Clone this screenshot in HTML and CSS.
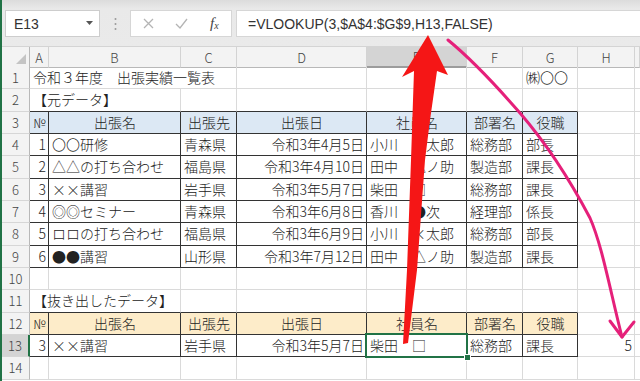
FILE: index.html
```html
<!DOCTYPE html>
<html lang="ja">
<head>
    <meta charset="UTF-8">
    <meta name="viewport" content="width=device-width, initial-scale=1.0">
    <title>出張実績一覧表</title>
    <link rel="stylesheet" href="styles.css">
</head>
<body>
    <div class="app">
        <div class="toolbar">
            <div class="namebox">
                <span>E13</span>
                <svg class="caret" width="7" height="4" viewBox="0 0 7 4"><path d="M0 0h7L3.5 4z" fill="#555"/></svg>
            </div>
            <div class="grip">
                <svg width="3" height="14" viewBox="0 0 3 14"><circle cx="1.5" cy="2" r="1" fill="#9a9a9a"/><circle cx="1.5" cy="7" r="1" fill="#9a9a9a"/><circle cx="1.5" cy="12" r="1" fill="#9a9a9a"/></svg>
            </div>
            <div class="fbuttons">
                <svg class="ico" width="11" height="11" viewBox="0 0 11 11"><path d="M1 1l9 9M10 1l-9 9" stroke="#b4b4b4" stroke-width="1.3"/></svg>
                <svg class="ico" width="13" height="11" viewBox="0 0 13 11"><path d="M1 6l4 4 7-9" stroke="#b4b4b4" stroke-width="1.3" fill="none"/></svg>
                <span class="fx"><i>f</i><sub>x</sub></span>
            </div>
            <div class="formula">=VLOOKUP(3,$A$4:$G$9,H13,FALSE)</div>
        </div>

        <div class="sheet">
            <div class="row colhead">
                <div class="corner"><svg width="10" height="10" viewBox="0 0 10 10"><path d="M10 0v10H0z" fill="#c4c4c4"/></svg></div>
                <div>A</div><div>B</div><div>C</div><div>D</div>
                <div class="sel-col">E</div><div>F</div><div>G</div><div>H</div><div></div>
            </div>

            <div class="row">
                <div class="rh">1</div>
                <div class="span3">令和３年度　出張実績一覧表</div>
                <div></div><div></div><div></div>
                <div>㈱〇〇</div><div></div><div></div>
            </div>
            <div class="row">
                <div class="rh">2</div>
                <div class="span2 kb">【元データ】</div>
                <div class="kb"></div><div class="kb"></div><div class="kb"></div><div class="kb"></div><div class="kb"></div>
                <div></div><div></div>
            </div>
            <div class="row">
                <div class="rh">3</div>
                <div class="k blue no">№</div>
                <div class="k blue c">出張名</div>
                <div class="k blue c">出張先</div>
                <div class="k blue c">出張日</div>
                <div class="k blue c">社員名</div>
                <div class="k blue c">部署名</div>
                <div class="k blue c">役職</div>
                <div></div><div></div>
            </div>
            <div class="row">
                <div class="rh">4</div>
                <div class="k r">1</div><div class="k">〇〇研修</div><div class="k">青森県</div>
                <div class="k r">令和3年4月5日</div><div class="k">小川　〇太郎</div>
                <div class="k">総務部</div><div class="k">部長</div><div></div><div></div>
            </div>
            <div class="row">
                <div class="rh">5</div>
                <div class="k r">2</div><div class="k">△△の打ち合わせ</div><div class="k">福島県</div>
                <div class="k r">令和3年4月10日</div><div class="k">田中　△ノ助</div>
                <div class="k">製造部</div><div class="k">課長</div><div></div><div></div>
            </div>
            <div class="row">
                <div class="rh">6</div>
                <div class="k r">3</div><div class="k">××講習</div><div class="k">岩手県</div>
                <div class="k r">令和3年5月7日</div><div class="k">柴田　□</div>
                <div class="k">総務部</div><div class="k">課長</div><div></div><div></div>
            </div>
            <div class="row">
                <div class="rh">7</div>
                <div class="k r">4</div><div class="k">◎◎セミナー</div><div class="k">青森県</div>
                <div class="k r">令和3年6月8日</div><div class="k">香川　●次</div>
                <div class="k">経理部</div><div class="k">係長</div><div></div><div></div>
            </div>
            <div class="row">
                <div class="rh">8</div>
                <div class="k r">5</div><div class="k">ロロの打ち合わせ</div><div class="k">福島県</div>
                <div class="k r">令和3年6月9日</div><div class="k">小川　×太郎</div>
                <div class="k">総務部</div><div class="k">部長</div><div></div><div></div>
            </div>
            <div class="row">
                <div class="rh">9</div>
                <div class="k r">6</div><div class="k">●●講習</div><div class="k">山形県</div>
                <div class="k r">令和3年7月12日</div><div class="k">田中　△ノ助</div>
                <div class="k">製造部</div><div class="k">課長</div><div></div><div></div>
            </div>
            <div class="row">
                <div class="rh">10</div>
                <div></div><div></div><div></div><div></div><div></div><div></div><div></div><div></div><div></div>
            </div>
            <div class="row">
                <div class="rh">11</div>
                <div class="span2 kb">【抜き出したデータ】</div>
                <div class="kb"></div><div class="kb"></div><div class="kb"></div><div class="kb"></div><div class="kb"></div>
                <div></div><div></div>
            </div>
            <div class="row">
                <div class="rh">12</div>
                <div class="k gold no">№</div>
                <div class="k gold c">出張名</div>
                <div class="k gold c">出張先</div>
                <div class="k gold c">出張日</div>
                <div class="k gold c">社員名</div>
                <div class="k gold c">部署名</div>
                <div class="k gold c">役職</div>
                <div></div><div></div>
            </div>
            <div class="row">
                <div class="rh sel-row">13</div>
                <div class="k r">3</div><div class="k">××講習</div><div class="k">岩手県</div>
                <div class="k r">令和3年5月7日</div><div class="k active">柴田　□</div>
                <div class="k">総務部</div><div class="k">課長</div><div class="r">5</div><div></div>
            </div>
            <div class="row">
                <div class="rh">14</div>
                <div></div><div></div><div></div><div></div><div></div><div></div><div></div><div></div><div></div>
            </div>
        </div>

        <!-- annotations drawn over the sheet -->
        <svg class="marks" width="640" height="381" viewBox="0 0 640 381">
            <path d="M448 40 C470 58 500 90 520 113 C545 142 570 180 590 218 C602 245 610 290 622 337" stroke="#e5207a" stroke-width="3" fill="none" stroke-linecap="round"/>
            <path d="M610 321 L622 337 L634 322" stroke="#e5207a" stroke-width="3" fill="none" stroke-linecap="round" stroke-linejoin="round"/>
            <polygon points="428,35 448,75 437,71 430,120 425,160 417,270 408,343 403,344 407,270 411,160 413,100 414,71 402,77" fill="#f51616"/>
        </svg>
    </div>
</body>
</html>
```

FILE: styles.css
```css
body {
    margin: 0;
    background-color: #ffffff;
    font-family: "Noto Sans CJK JP", "Noto Sans", sans-serif;
    color: #222222;
}

.app {
    position: relative;
    width: 640px;
    height: 381px;
    overflow: hidden;
    border-left: 2px solid #217346;
    box-sizing: border-box;
}

/* formula bar */
.toolbar {
    height: 47px;
    box-sizing: border-box;
    padding-top: 10px;
    display: flex;
    align-items: flex-start;
    background: linear-gradient(#dcdcdc, #e9e9e9 9px, #eaeaea);
    border-bottom: 1px solid #d4d4d4;
}

.namebox {
    margin-left: 3px;
    width: 95px;
    height: 27px;
    box-sizing: border-box;
    background-color: #ffffff;
    border: 1px solid #cdcdcd;
    display: flex;
    align-items: center;
    justify-content: space-between;
    padding: 0 6px 0 8px;
    font-family: "Liberation Sans", sans-serif;
    font-size: 14px;
    color: #333333;
}

.caret {
    margin-top: -2px;
}

.grip {
    width: 30px;
    height: 27px;
    display: flex;
    align-items: center;
    justify-content: center;
}

.fbuttons {
    width: 102px;
    height: 27px;
    box-sizing: border-box;
    background-color: #ffffff;
    border: 1px solid #d6d6d6;
    display: flex;
    align-items: center;
    padding-left: 12px;
    gap: 21px;
}

.fx {
    font-family: "Liberation Serif", serif;
    font-size: 15px;
    color: #444444;
    margin-left: 1px;
}

.fx sub {
    font-size: 10px;
    font-style: italic;
    vertical-align: -1px;
}

.formula {
    margin-left: 4px;
    flex: 1;
    height: 27px;
    box-sizing: border-box;
    background-color: #ffffff;
    border: 1px solid #d6d6d6;
    border-right: none;
    display: flex;
    align-items: center;
    padding-left: 11px;
    font-family: "Liberation Sans", sans-serif;
    font-size: 14px;
    color: #333333;
}

/* sheet grid */
.row {
    display: grid;
    grid-template-columns: 28px 19px 132px 56px 130px 100px 56px 55px 57px 1fr;
    height: 22.33px;
}

.row > div {
    box-sizing: border-box;
    border-right: 1px solid #dadada;
    border-bottom: 1px solid #dadada;
    display: flex;
    align-items: center;
    padding: 0 2px 1px 3px;
    font-size: 14px;
    font-weight: 300;
    white-space: nowrap;
    overflow: visible;
}

.colhead {
    height: 20px;
}

.colhead > div {
    justify-content: center;
    background-color: #f3f3f3;
    border-right-color: #d3d3d3;
    border-bottom-color: #b8b8b8;
    color: #444444;
    font-size: 13px;
    padding: 0;
}

.colhead .corner {
    justify-content: flex-end;
    align-items: flex-end;
    padding: 0 3px 3px 0;
    border-right-color: #b8b8b8;
}

.colhead .sel-col {
    background-color: #d4d4d4;
    border-bottom: 2px solid #9c9c9c;
}

.row > .rh {
    justify-content: center;
    background-color: #f3f3f3;
    border-right-color: #b8b8b8;
    border-bottom-color: #d6d6d6;
    color: #444444;
    font-size: 13px;
    padding: 0;
}

.row > .sel-row {
    background-color: #d4d4d4;
    border-right: 2px solid #217346;
}

.span2 {
    grid-column: span 2;
}

.span3 {
    grid-column: span 3;
}

.row > .k {
    border-right-color: #333333;
    border-bottom-color: #333333;
}

.row > .kb {
    border-bottom-color: #333333;
}

.row > .c {
    justify-content: center;
}

.row > .r {
    justify-content: flex-end;
}

.row > .no {
    font-size: 13px;
    padding: 0;
    justify-content: center;
    letter-spacing: -1px;
}

.blue {
    background-color: #dce8f4;
}

.gold {
    background-color: #fdecc9;
}

.row > .active {
    position: relative;
}

.active::after {
    content: "";
    position: absolute;
    left: -2px;
    top: -2px;
    right: -2px;
    bottom: -2px;
    border: 2px solid #217346;
}

.active::before {
    content: "";
    position: absolute;
    right: -5px;
    bottom: -5px;
    width: 5px;
    height: 5px;
    background-color: #217346;
    border: 1px solid #ffffff;
    z-index: 1;
}

.marks {
    position: absolute;
    left: -2px;
    top: 0;
    pointer-events: none;
}
```
